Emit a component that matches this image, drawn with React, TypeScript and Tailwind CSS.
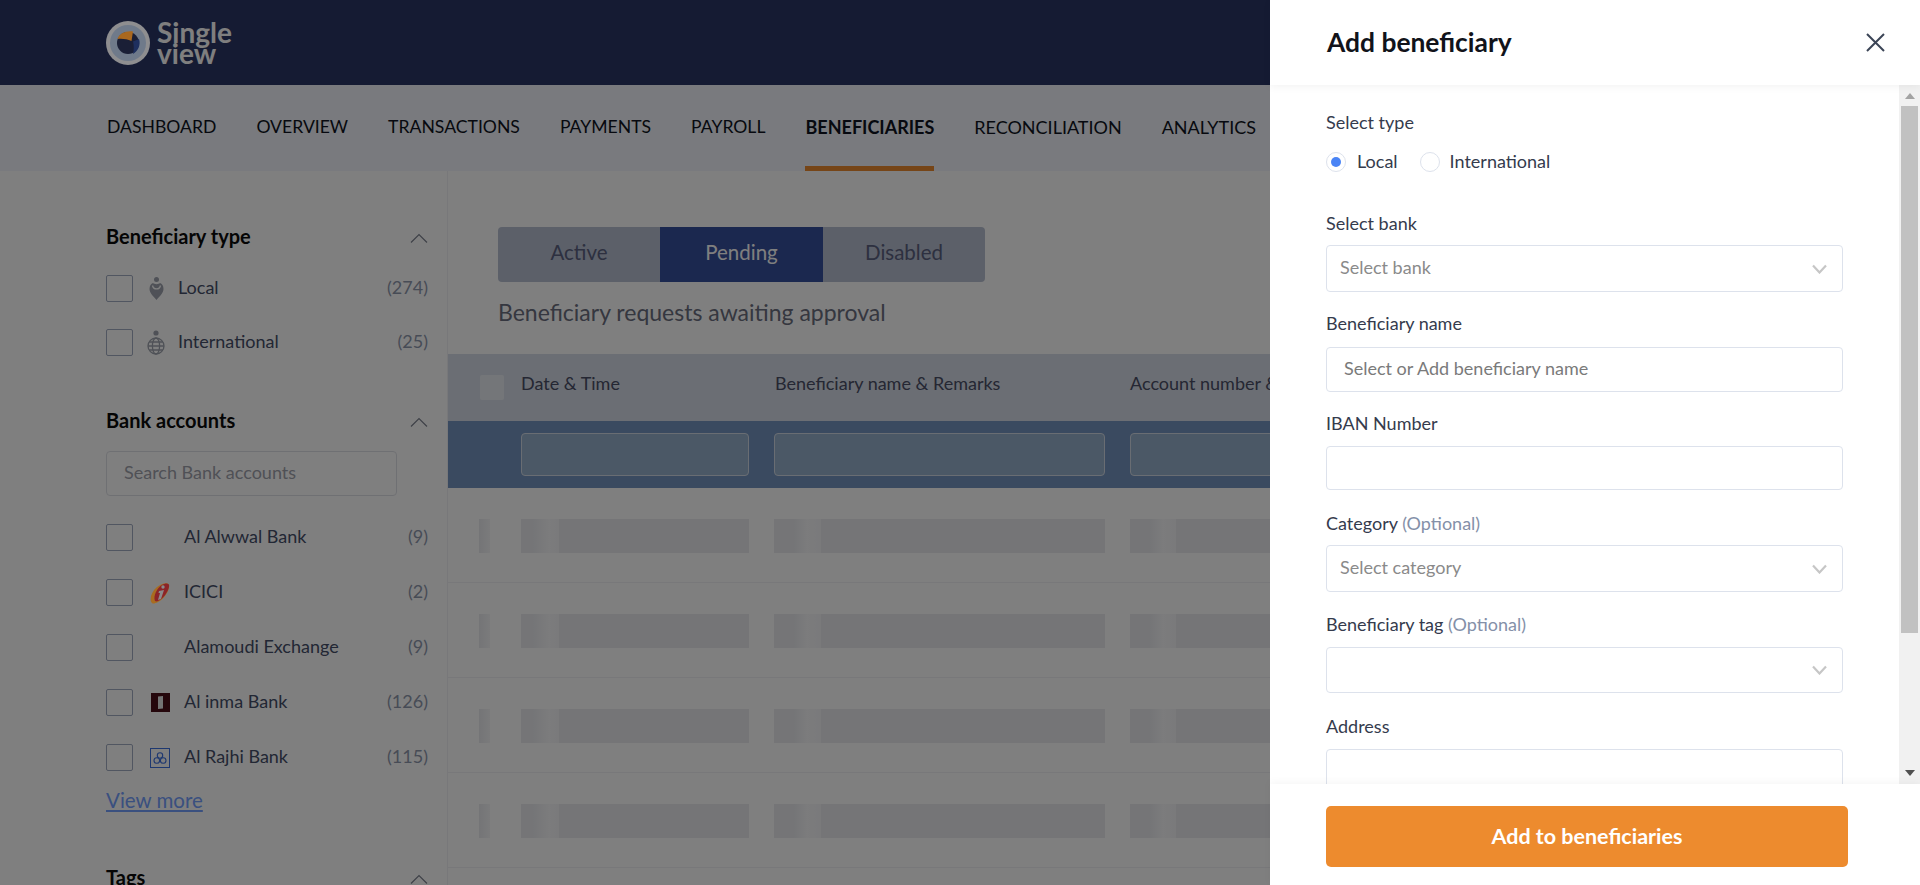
const NAV = ["DASHBOARD", "OVERVIEW", "TRANSACTIONS", "PAYMENTS", "PAYROLL", "BENEFICIARIES", "RECONCILIATION", "ANALYTICS"];

const BANKS = [
  { name: "Al Alwwal Bank", count: 9, logo: null },
  { name: "ICICI", count: 2, logo: "icici" },
  { name: "Alamoudi Exchange", count: 9, logo: null },
  { name: "Al inma Bank", count: 126, logo: "inma" },
  { name: "Al Rajhi Bank", count: 115, logo: "rajhi" },
];

function Logo() {
  return (
    <div className="flex items-center gap-[7px]">
      {/* the logo art stays brighter than the dim layer */}
      <svg className="relative z-[11]" width="44" height="44" viewBox="0 0 44 44">
        <circle cx="22" cy="22" r="22" fill="#8e8e90" />
        <circle cx="22" cy="22" r="18" fill="#6f7a8a" />
        <circle cx="22" cy="22" r="11" fill="#1a1f36" />
        <path d="M11.500 18 C13 12.500 20 9.500 27 10.500 L25.500 20 C21 18 16 17.500 11.500 18 Z" fill="#a9681f" />
        <path d="M27 20.500 L33 18 C35 24 32 30 27 33 C28 29 28 25 27 20.500 Z" fill="#1e2f5e" />
      </svg>
      <div className="text-[28px] font-bold leading-[21px] text-white">
        Single
        <br />
        view
      </div>
    </div>
  );
}

function Chevron() {
  return (
    <svg className="mt-[4px]" width="18" height="10" viewBox="0 0 18 10" fill="none" stroke="#7d828f" strokeWidth="1.2">
      <polyline points="1,9.5 9,1.5 17,9.5" />
    </svg>
  );
}

function DownChevron() {
  return (
    <svg width="15" height="10" viewBox="0 0 15 10" fill="none" stroke="#c6c6c6" strokeWidth="2.2">
      <polyline points="1,1.5 7.5,8.5 14,1.5" />
    </svg>
  );
}

function CloseIcon() {
  return (
    <svg width="19" height="19" viewBox="0 0 19 19" fill="none" stroke="#3b4456" strokeWidth="2">
      <path d="M1 1 L18 18 M18 1 L1 18" />
    </svg>
  );
}

function PinIcon() {
  return (
    <svg width="15" height="23" viewBox="0 0 15 23" fill="#9ea3ae">
      <circle cx="7.5" cy="2.500" r="2.500" />
      <path d="M0.500 12 C0.500 9 2 6.500 4 6 C5 7.500 10 7.500 11 6 C13 6.500 14.500 9 14.500 12 C14.500 16 10 20 7.500 23 C5 20 0.500 16 0.500 12 Z" />
      <path d="M3.500 8.500 C4.500 13 10.500 13 11.500 8.500" fill="none" stroke="#fff" strokeWidth="1.300" />
    </svg>
  );
}

function GlobeIcon() {
  return (
    <svg width="18" height="25" viewBox="0 0 18 25" fill="none" stroke="#9ea3ae" strokeWidth="1.3">
      <circle cx="9" cy="3" r="2.600" fill="#9ea3ae" stroke="none" />
      <circle cx="9" cy="16" r="8" />
      <ellipse cx="9" cy="16" rx="3.600" ry="8" />
      <path d="M1 16 H17 M2.200 12 H15.800 M2.200 20 H15.800" />
    </svg>
  );
}

function BankLogo({ kind }: { kind: string | null }) {
  if (kind === "icici") {
    return (
      <svg className="relative z-[11]" width="20" height="22" viewBox="0 0 20 22">
        <path d="M2 21 C-1 18 1 10 7 5 C12 1 18 0 19 3 C20 8 14 17 8 20 C5 21.500 3 22 2 21 Z" fill="#a86c20" />
        <path d="M5 19 C3 14 7 6 12 3 C16 0.500 20 1 19 5 C18 10 13 17 8 19 C7 19.500 6 19.500 5 19 Z" fill="#8c2428" />
        <circle cx="13" cy="5" r="1.700" fill="#8a8a8a" />
        <path d="M9 9 L14 8 L11 17 L8 18 L10 11 L8.500 11 Z" fill="#8a8a8a" />
      </svg>
    );
  }
  if (kind === "inma") {
    return (
      <svg width="19" height="19" viewBox="0 0 19 19">
        <rect width="19" height="19" fill="#4a0f18" />
        <path d="M7 3.500 L12 3 V15.500 L7 16 Z" fill="#e8e8e8" />
      </svg>
    );
  }
  if (kind === "rajhi") {
    return (
      <svg width="20" height="20" viewBox="0 0 20 20" fill="none" stroke="#3d70e0">
        <rect x="0.500" y="0.500" width="19" height="19" strokeWidth="1" />
        <circle cx="10" cy="7.500" r="2.700" strokeWidth="1.100" />
        <circle cx="6.800" cy="12.500" r="2.800" strokeWidth="1.100" />
        <circle cx="13.200" cy="12.500" r="2.800" strokeWidth="1.100" />
      </svg>
    );
  }
  return null;
}

function FilterRow({ icon, label, count }: { icon: React.ReactNode; label: string; count: number }) {
  return (
    <div className="flex items-center h-[27px]">
      <div className="w-[27px] h-[27px] rounded-[2px] border border-[#a3adc2] bg-white" />
      <div className="w-[18px] ml-[14px] flex justify-center">{icon}</div>
      <span className="ml-[13px] pb-[2px] text-[18px] text-[#454e69]">{label}</span>
      <span className="ml-auto pb-[2px] text-[18px] text-[#8f98ad]">({count})</span>
    </div>
  );
}

function Sidebar() {
  return (
    <aside className="w-[448px] shrink-0 border-r border-[#f0f1f4] pl-[106px] pr-[19px] pt-[53px]">
      <div className="flex items-center justify-between h-[24px]">
        <h3 className="text-[20px] font-bold text-[#0a0a0a]">Beneficiary type</h3>
        <Chevron />
      </div>
      <div className="mt-[27px] flex flex-col gap-[27px]">
        <FilterRow icon={<PinIcon />} label="Local" count={274} />
        <FilterRow icon={<GlobeIcon />} label="International" count={25} />
      </div>

      <div className="flex items-center justify-between h-[24px] mt-[52px]">
        <h3 className="text-[20px] font-bold text-[#0a0a0a]">Bank accounts</h3>
        <Chevron />
      </div>
      <input
        className="mt-[19px] w-[291px] h-[45px] rounded-[4px] border border-[#dfe1e6] px-[17px] pb-[4px] text-[18px] placeholder:text-[#9fa2ac] outline-none"
        placeholder="Search Bank accounts"
      />
      <div className="mt-[28px] flex flex-col gap-[28px]">
        {BANKS.map((bank) => (
          <div key={bank.name} className="flex items-center h-[27px]">
            <div className="w-[27px] h-[27px] rounded-[2px] border border-[#a3adc2] bg-white" />
            <div className="w-[20px] ml-[17px] flex justify-center">
              <BankLogo kind={bank.logo} />
            </div>
            <span className="ml-[14px] pb-[2px] text-[18px] text-[#454e69]">{bank.name}</span>
            <span className="ml-auto pb-[2px] text-[18px] text-[#8f98ad]">({bank.count})</span>
          </div>
        ))}
      </div>
      <a className="block mt-[17px] text-[20.5px] leading-[24px] text-[#74a0ff] underline">View more</a>

      <div className="flex items-center justify-between h-[24px] mt-[53px]">
        <h3 className="text-[20px] font-bold text-[#0a0a0a]">Tags</h3>
        <Chevron />
      </div>
    </aside>
  );
}

function TableRow() {
  return (
    <div className="grid grid-cols-[73px_253px_356px_1fr] h-[95px] pt-[2px] border-b border-[#f0f1f5] items-center">
      <div className="pl-[31px]">
        <div className="w-[11px] h-[34px] bg-[linear-gradient(90deg,#e9eaee_0px,#f6f6f8_11px)]" />
      </div>
      <div className="w-[228px] h-[34px] bg-[linear-gradient(90deg,#eaebef_0px,#eaebef_12px,#f8f8fa_28px,#f4f4f7_38px,#eaebef_38px)]" />
      <div className="w-[331px] h-[34px] bg-[linear-gradient(90deg,#eaebef_0px,#eaebef_20px,#f8f8fa_33px,#f4f4f7_47px,#eaebef_47px)]" />
      <div className="w-[331px] h-[34px] bg-[linear-gradient(90deg,#eaebef_0px,#eaebef_20px,#f8f8fa_33px,#f4f4f7_46px,#eaebef_46px)]" />
    </div>
  );
}

function MainContent() {
  return (
    <main className="flex-1 min-w-0 overflow-hidden pt-[56px]">
      <div className="pl-[50px]">
        <div className="flex w-[487px] h-[55px] rounded-[4px] overflow-hidden bg-[#b8c0d2] text-[20.5px] text-[#5a6080]">
          <div className="w-[162px] pb-[4px] flex items-center justify-center">Active</div>
          <div className="w-[163px] pb-[4px] flex items-center justify-center bg-[#36509e] text-white">Pending</div>
          <div className="w-[162px] pb-[4px] flex items-center justify-center">Disabled</div>
        </div>
        <p className="mt-[15px] text-[23px] leading-[30px] text-[#6b6e80]">Beneficiary requests awaiting approval</p>
      </div>

      <div className="mt-[27px] w-[1472px]">
        <div className="grid grid-cols-[73px_253px_356px_1fr] h-[67px] bg-[#d6dde8] text-[18px] text-[#4a4e66]">
          <div className="pl-[32px] pt-[21px]">
            <div className="w-[24px] h-[25px] rounded-[2px] bg-[#e9edf2]" />
          </div>
          <div className="pt-[16px]">Date &amp; Time</div>
          <div className="pt-[16px] pl-[1px]">Beneficiary name &amp; Remarks</div>
          <div className="pt-[16px]">Account number &amp; IBAN</div>
        </div>
        <div className="grid grid-cols-[73px_253px_356px_1fr] h-[67px] bg-[#7494c0] items-center">
          <div />
          <div className="w-[228px] h-[43px] rounded-[4px] border border-[#d3dbe6] bg-[#97b1cc]" />
          <div className="w-[331px] h-[43px] rounded-[4px] border border-[#d3dbe6] bg-[#97b1cc]" />
          <div className="w-[331px] h-[43px] rounded-[4px] border border-[#d3dbe6] bg-[#97b1cc]" />
        </div>
        <TableRow />
        <TableRow />
        <TableRow />
        <TableRow />
      </div>
    </main>
  );
}

function SelectBox({ placeholder, className }: { placeholder?: string; className: string }) {
  return (
    <div className={`flex items-center justify-between rounded-[4px] border border-[#dde2ec] pl-[13px] pr-[15px] text-[18px] text-[#8a8a8a] ${className}`}>
      <span className="pb-[2px]">{placeholder}</span>
      <DownChevron />
    </div>
  );
}

function Label({ text, optional, className }: { text: string; optional?: boolean; className: string }) {
  return (
    <label className={`block text-[18px] leading-[24px] text-[#353b4d] ${className}`}>
      {text}
      {optional && <span className="text-[#8490a8]"> (Optional)</span>}
    </label>
  );
}

function Drawer() {
  return (
    <div className="absolute right-0 top-0 bottom-0 z-20 w-[650px] bg-white flex flex-col">
      <div className="relative z-10 h-[85px] shrink-0 flex items-center justify-between pl-[57px] pr-[35px] shadow-[0_2px_8px_rgba(0,0,0,0.05)]">
        <h2 className="text-[26.4px] font-bold text-[#11131a]">Add beneficiary</h2>
        <CloseIcon />
      </div>

      <div className="flex-1 min-h-0 flex">
        <div className="flex-1 min-w-0 overflow-hidden pl-[56px] pt-[25px]">
          <div className="w-[517px]">
            <Label text="Select type" className="" />
            <div className="mt-[18px] flex items-center h-[20px] text-[18px] text-[#353b4d]">
              <span className="w-[20px] h-[20px] rounded-full border border-[#dde2ec] flex items-center justify-center">
                <span className="w-[10px] h-[10px] rounded-full bg-[#4a84f5]" />
              </span>
              <span className="ml-[11px] pb-[2px]">Local</span>
              <span className="ml-[22px] w-[20px] h-[20px] rounded-full border border-[#dde2ec]" />
              <span className="ml-[10px] pb-[2px]">International</span>
            </div>

            <Label text="Select bank" className="mt-[39px] mb-[10px]" />
            <SelectBox placeholder="Select bank" className="h-[47px]" />

            <Label text="Beneficiary name" className="mt-[19px] mb-[12px]" />
            <input
              className="block w-full h-[45px] rounded-[4px] border border-[#dde2ec] px-[17px] pb-[4px] text-[18px] placeholder:text-[#7a7a7a] outline-none"
              placeholder="Select or Add beneficiary name"
            />

            <Label text="IBAN Number" className="mt-[19px] mb-[11px]" />
            <input className="block w-full h-[44px] rounded-[4px] border border-[#dde2ec] outline-none" />

            <Label text="Category" optional className="mt-[21px] mb-[10px]" />
            <SelectBox placeholder="Select category" className="h-[47px]" />

            <Label text="Beneficiary tag" optional className="mt-[20px] mb-[11px]" />
            <SelectBox className="h-[46px]" />

            <Label text="Address" className="mt-[21px] mb-[11px]" />
            <div className="h-[80px] rounded-[4px] border border-[#dde2ec]" />
          </div>
        </div>

        <div className="w-[21px] shrink-0 bg-[#f1f1f1] flex flex-col items-center">
          <svg className="mt-[8px]" width="10" height="6" viewBox="0 0 10 6" fill="#a3a3a3">
            <polygon points="5,0 10,6 0,6" />
          </svg>
          <div className="mt-[7px] w-[17px] h-[527px] bg-[#c1c1c1]" />
          <svg className="mt-auto mb-[8px]" width="10" height="6" viewBox="0 0 10 6" fill="#505050">
            <polygon points="0,0 10,0 5,6" />
          </svg>
        </div>
      </div>

      <div className="relative z-10 h-[101px] shrink-0 bg-white pl-[56px] pt-[22px] shadow-[0_-2px_8px_rgba(0,0,0,0.04)]">
        <button className="w-[522px] h-[61px] rounded-[5px] bg-[#ed8b2e] text-[21.5px] font-bold text-white">
          Add to beneficiaries
        </button>
      </div>
    </div>
  );
}

function navClass(item: string) {
  if (item === "BENEFICIARIES") {
    return "flex items-center pt-[3px] border-b-[5px] border-[#ed8b2e] text-[18px] font-bold text-[#0e1220]";
  }
  if (item === "RECONCILIATION" || item === "ANALYTICS") {
    return "flex items-center pt-[3px] border-b-[5px] border-transparent text-[18px] text-[#0e1220]";
  }
  return "flex items-center pt-[3px] border-b-[5px] border-transparent text-[17.6px] text-[#0e1220]";
}

export default function App() {
  return (
    <div className="relative w-[1920px] h-[885px] overflow-hidden bg-white font-[Lato,sans-serif]">
      <header className="h-[85px] bg-[#2a3666] pl-[106px] flex items-center">
        <Logo />
      </header>
      <nav className="h-[86px] bg-[#f2f5fc] pl-[107px] flex gap-[40px]">
        {NAV.map((item) => (
          <div key={item} className={navClass(item)}>
            {item}
          </div>
        ))}
      </nav>
      <div className="flex h-[714px]">
        <Sidebar />
        <MainContent />
      </div>

      {/* Dim layer behind the drawer */}
      <div className="absolute inset-0 z-10 bg-black/50" />
      <Drawer />
    </div>
  );
}
